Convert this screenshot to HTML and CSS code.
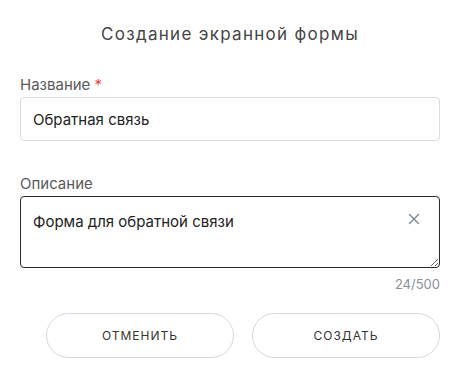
FILE: index.html
```html
<!DOCTYPE html>
<html lang="ru">
<head>
<meta charset="utf-8">
<link rel="stylesheet" href="styles.css">
</head>
<body>
<div class="dialog">
  <h1 class="title">Создание экранной формы</h1>
  <div class="field">
    <label class="label">Название <span class="req">*</span></label>
    <div class="input">Обратная связь</div>
  </div>
  <div class="field field-desc">
    <label class="label">Описание</label>
    <div class="area-wrap">
      <textarea class="area">Форма для обратной связи</textarea>
      <span class="clear">
        <svg width="12" height="12" viewBox="0 0 12 12"><path d="M1.5 1.5 L10.5 10.5 M10.5 1.5 L1.5 10.5" stroke="#7b8391" stroke-width="1.3" stroke-linecap="round"/></svg>
      </span>
    </div>
    <div class="counter">24/500</div>
  </div>
  <div class="actions">
    <button class="btn">Отменить</button>
    <button class="btn">Создать</button>
  </div>
</div>
</body>
</html>
```
FILE: styles.css
```css
html, body {
  margin: 0;
  background: #fff;
}
.dialog {
  width: 460px;
  height: 376px;
  box-sizing: border-box;
  padding: 22px 20px 0 20px;
  font-family: Inter, "Noto Sans", sans-serif;
}
.title {
  margin: 0;
  font-size: 17px;
  font-weight: 400;
  line-height: 24px;
  text-align: center;
  color: #444;
  letter-spacing: 1.3px;
}
.field {
  display: flex;
  flex-direction: column;
  margin-top: 29px;
}
.label {
  font-size: 15px;
  line-height: 20px;
  color: #5a5a5a;
  margin-bottom: 2px;
}
.req {
  color: #e5484d;
}
.input {
  height: 44px;
  box-sizing: border-box;
  border: 1px solid #d8dbe3;
  border-radius: 4px;
  padding: 0 12px;
  display: flex;
  align-items: center;
  font-size: 15px;
  color: #222;
}
.field-desc {
  margin-top: 33px;
}
.area-wrap {
  position: relative;
}
.area {
  display: block;
  width: 100%;
  height: 72px;
  box-sizing: border-box;
  border: 1px solid #2b2b2b;
  border-radius: 4px;
  padding: 15px 40px 10px 12px;
  font-family: inherit;
  font-size: 15px;
  line-height: 20px;
  color: #222;
  resize: vertical;
  outline: none;
  margin: 0;
}
.clear {
  position: absolute;
  top: 17px;
  right: 20px;
  width: 12px;
  height: 12px;
  display: flex;
}
.counter {
  text-align: right;
  font-size: 13px;
  line-height: 16px;
  color: #8a8f99;
  margin-top: 8px;
}
.actions {
  display: flex;
  justify-content: flex-end;
  gap: 18px;
  margin-top: 21px;
}
.btn {
  width: 188px;
  height: 45px;
  border: 1px solid #d3d7e2;
  border-radius: 23px;
  background: #fff;
  font-family: inherit;
  font-size: 12px;
  letter-spacing: 1px;
  text-transform: uppercase;
  color: #333;
  cursor: pointer;
}
```
